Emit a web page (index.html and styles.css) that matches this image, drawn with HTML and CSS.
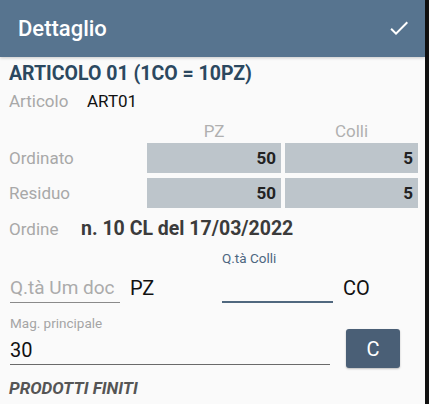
FILE: index.html
```html
<!DOCTYPE html>
<html lang="it">
<head>
  <meta charset="UTF-8">
  <meta name="viewport" content="width=device-width, initial-scale=1.0">
  <title>Dettaglio</title>
  <link rel="stylesheet" href="styles.css">
</head>
<body>

<div class="screen">
  <div class="appbar">
    <span class="appbar-title">Dettaglio</span>
    <svg class="check" width="24" height="24" viewBox="0 0 24 24">
      <path d="M9 16.17L4.83 12l-1.42 1.41L9 19 21 7l-1.41-1.41z" fill="#fff"/>
    </svg>
  </div>

  <div class="content">
    <h1 class="article-title">ARTICOLO 01 (1CO = 10PZ)</h1>
    <div class="info-row">
      <span class="info-label">Articolo</span>
      <span class="info-value">ART01</span>
    </div>

    <div class="qty-grid">
      <span></span>
      <span class="col-head">PZ</span>
      <span class="col-head">Colli</span>

      <span class="row-label">Ordinato</span>
      <span class="cell">50</span>
      <span class="cell">5</span>

      <span class="row-label">Residuo</span>
      <span class="cell">50</span>
      <span class="cell">5</span>
    </div>

    <div class="order-row">
      <span class="info-label">Ordine</span>
      <span class="order-value">n. 10 CL del 17/03/2022</span>
    </div>

    <div class="qty-inputs">
      <div class="field field-um">
        <span class="field-label">&nbsp;</span>
        <span class="field-line hint">Q.tà Um doc</span>
      </div>
      <span class="unit unit-pz">PZ</span>
      <div class="field field-colli">
        <span class="field-label active">Q.tà Colli</span>
        <span class="field-line focused">&nbsp;</span>
      </div>
      <span class="unit">CO</span>
    </div>

    <div class="mag-row">
      <div class="field field-mag">
        <span class="field-label">Mag. principale</span>
        <span class="field-line">30</span>
      </div>
      <button type="button" class="btn-c">C</button>
    </div>

    <div class="category">PRODOTTI FINITI</div>
  </div>
</div>

</body>
</html>
```

FILE: styles.css
```css
html, body {
    margin: 0;
    padding: 0;
    background-color: #111;
}

body {
    font-family: Roboto, "Noto Sans", sans-serif;
    height: 404px;
    overflow: hidden;
}

.screen {
    width: 425px;
    height: 404px;
    background-color: #fafafa;
}

.appbar {
    height: 57px;
    background-color: #57748f;
    display: flex;
    align-items: center;
    justify-content: space-between;
    padding: 0 14px 0 18px;
    box-shadow: 0 1px 3px rgba(0, 0, 0, 0.2);
}

.appbar-title {
    color: #fff;
    font-size: 22px;
    font-weight: 500;
}

.check {
    display: block;
    margin-top: -1px;
}

.content {
    padding: 0 9px;
}

.article-title {
    margin: 6px 0 0;
    font-size: 19.5px;
    line-height: 22px;
    font-weight: 700;
    color: #2b4860;
}

.info-row {
    margin-top: 6px;
    display: flex;
    font-size: 17px;
    line-height: 20px;
}

.info-label {
    color: #a8a8a8;
    width: 78px;
}

.info-value {
    color: #111;
}

.qty-grid {
    display: grid;
    grid-template-columns: 134px 134px 133px;
    grid-template-rows: 27px 30px 30px;
    column-gap: 4px;
    row-gap: 5px;
    align-items: center;
}

.col-head {
    align-self: end;
    text-align: center;
    color: #b0b0b0;
    font-size: 17px;
    line-height: 14px;
}

.row-label {
    color: #a8a8a8;
    font-size: 17px;
}

.cell {
    height: 30px;
    line-height: 30px;
    background-color: #bdc5cb;
    text-align: right;
    padding-right: 5px;
    font-weight: 700;
    font-size: 17px;
    color: #222;
}

.order-row {
    margin-top: 8px;
    display: flex;
    align-items: baseline;
    line-height: 26px;
}

.order-row .info-label {
    font-size: 17px;
    width: 72px;
}

.order-value {
    font-size: 19.5px;
    font-weight: 700;
    color: #3b3b3b;
}

.qty-inputs {
    margin-top: 8px;
    display: flex;
    align-items: flex-end;
}

.field {
    display: flex;
    flex-direction: column;
    margin-left: 1px;
}

.field-label {
    font-size: 13.5px;
    line-height: 16px;
    margin-bottom: 7px;
    color: #9a9a9a;
    white-space: nowrap;
}

.field-label.active {
    color: #4d6680;
}

.field-line {
    font-size: 20px;
    line-height: 28px;
    height: 28px;
    color: #111;
    border-bottom: 1px solid #8a8a8a;
    white-space: nowrap;
    overflow: hidden;
}

.field-line.hint {
    color: #ababab;
    font-size: 19px;
}

.field-line.focused {
    border-bottom: 2px solid #50687f;
}

.field-um {
    width: 110px;
}

.field-colli {
    width: 111px;
}

.unit {
    font-size: 20px;
    line-height: 28px;
    color: #111;
    margin-left: 10px;
    padding-bottom: 1px;
}

.unit-pz {
    width: 91px;
}

.mag-row {
    margin-top: 12px;
    display: flex;
    align-items: flex-start;
}

.field-mag {
    width: 320px;
}

.field-mag .field-label {
    margin-bottom: 5px;
    color: #a5a5a5;
}

.field-mag .field-line {
    border-bottom-color: #6a6a6a;
}

.btn-c {
    margin-left: 16px;
    margin-top: 14px;
    width: 54px;
    height: 39px;
    border: none;
    border-radius: 3px;
    background-color: #4a5f76;
    color: #fff;
    font-family: Roboto, sans-serif;
    font-size: 20px;
    box-shadow: 0 1px 2px rgba(0, 0, 0, 0.25);
}

.category {
    margin-top: 10px;
    font-size: 17px;
    line-height: 20px;
    font-weight: 700;
    font-style: italic;
    color: #555;
}
```
